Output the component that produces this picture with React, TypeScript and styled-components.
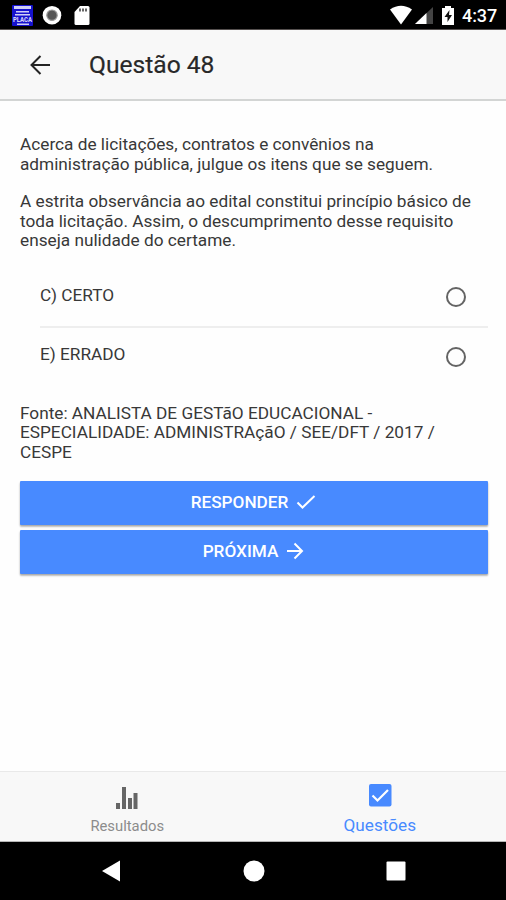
import React from "react";
import styled, { createGlobalStyle } from "styled-components";

const GlobalStyle = createGlobalStyle`
  *, *::before, *::after { box-sizing: border-box; }
  body { margin: 0; background: #fff; font-family: Roboto, "Liberation Sans", sans-serif; }
  svg { display: block; flex: none; }
`;

const Screen = styled.div`
  width: 506px;
  height: 900px;
  display: flex;
  flex-direction: column;
  overflow: hidden;
  background: #fefefe;
`;

const StatusBar = styled.div`
  height: 30px;
  flex: none;
  display: flex;
  justify-content: space-between;
  background: #000;
  border-bottom: 1px solid #55504f;
`;

const Clock = styled.span`
  width: 36px;
  margin: 5px 8px 0 0;
  color: #fff;
  font-size: 18px;
  line-height: 21px;
  font-weight: 500;
  letter-spacing: -0.1px;
  white-space: nowrap;
`;

const Header = styled.header`
  height: 71px;
  flex: none;
  display: flex;
  align-items: center;
  padding: 0 0 0 28px;
  background: #f8f8f8;
  border-bottom: 2px solid #d3d5d4;
`;

const BackButton = styled.button`
  width: 61px;
  padding: 0;
  border: 0;
  background: none;
`;

const Title = styled.h1`
  margin: 0;
  color: #282828;
  font-size: 24.6px;
  line-height: 30px;
  font-weight: 400;
  -webkit-text-stroke: 0.2px #282828;
`;

const Content = styled.main`
  flex: 1;
  display: flex;
  flex-direction: column;
  padding: 34px 18px 0 20px;
`;

const Paragraph = styled.p<{ $gap: number }>`
  margin: 0 0 ${(p) => p.$gap}px;
  color: #383838;
  font-size: 17.23px;
  line-height: 19.7px;
  white-space: nowrap;
`;

const Options = styled.div`
  display: flex;
  flex-direction: column;
  padding-left: 20px;
  margin-bottom: 17px;
`;

const Option = styled.label<{ $divided?: boolean }>`
  height: ${(p) => (p.$divided ? 61 : 59)}px;
  display: flex;
  align-items: center;
  justify-content: space-between;
  padding: ${(p) => (p.$divided ? "2px 22px 0 0" : "0 22px 1px 0")};
  color: #383838;
  font-size: 17.23px;
  line-height: 20px;
  border-bottom: ${(p) => (p.$divided ? "2px solid #eeeeee" : "none")};
`;

const OptionText = styled.span`
  margin-top: -5px;
`;

const Radio = styled.span`
  width: 20px;
  height: 20px;
  border: 2px solid #646464;
  border-radius: 50%;
`;

const ActionButton = styled.button`
  height: 44px;
  flex: none;
  display: flex;
  align-items: center;
  justify-content: center;
  gap: 7px;
  margin: 0 0 5px;
  padding: 0 0 1px;
  border: 0;
  border-radius: 1px;
  background: #488aff;
  color: #fff;
  font: 500 17.2px/20px Roboto, "Liberation Sans", sans-serif;
  box-shadow: 0 2px 2px rgba(0, 0, 0, 0.22), 0 1px 2px rgba(0, 0, 0, 0.18);
`;

const TabBar = styled.nav`
  height: 71px;
  flex: none;
  display: grid;
  grid-template-columns: 1fr 1fr;
  padding-left: 1px;
  background: #f8f8f8;
  border-top: 1px solid #e9e9e9;
  border-bottom: 1px solid #b5b5b5;
`;

const Tab = styled.a<{ $active?: boolean }>`
  display: flex;
  flex-direction: column;
  align-items: center;
  padding-top: ${(p) => (p.$active ? 12 : 14)}px;
  gap: ${(p) => (p.$active ? 8 : 6)}px;
  color: ${(p) => (p.$active ? "#488aff" : "#8c8c8c")};
  font-size: ${(p) => (p.$active ? 17.2 : 14.8)}px;
  line-height: 20px;
`;

const NavBar = styled.div`
  height: 58px;
  flex: none;
  display: flex;
  align-items: center;
  justify-content: space-between;
  padding: 0 100px 0 101px;
  background: #000;
`;

const NotificationIcons = () => (
  <svg width="120" height="29" viewBox="0 0 120 29">
    <rect x="12" y="5" width="21" height="21" rx="1" fill="#1512cf" />
    <g fill="#cfcff6">
      <path d="M14 6h17v3H14zM16 11h13v1.6H16zM15 14h15v1.5H15zM17 23.5h12v1.5H17z" />
      <text x="13" y="22" fontSize="6.5" fontWeight="900" textLength="19" lengthAdjust="spacingAndGlyphs">PLACA</text>
    </g>
    <circle cx="52" cy="15.2" r="9.3" fill="#fff" />
    <circle cx="52" cy="15.2" r="5.2" fill="#555" stroke="#999" strokeWidth="1.2" />
    <path d="M80 6h8q1.500 0 1.500 1.500v16q0 1.500-1.500 1.500H76q-1.500 0-1.500-1.500V12z" fill="#fff" />
    <path d="M80 8.500v3M83 8.500v3M86 8.500v3" stroke="#333" strokeWidth="1.500" />
  </svg>
);

const SystemIcons = () => (
  <svg width="72" height="29" viewBox="0 0 72 29">
    <path d="M0 9.500Q11 2 22 9.500L11 24.500z" fill="#fff" />
    <path d="M43 7v17H25z" fill="#444" />
    <path d="M36.500 13v11H25z" fill="#fff" />
    <path d="M55 6h6v2h3v17H52V8h3z" fill="#fff" />
    <path d="M59.500 10l-5 7h3v5l4.500-7h-3z" fill="#111" />
  </svg>
);

const StatusRight = styled.div`
  display: flex;
`;

export default function App() {
  return (
    <>
      <GlobalStyle />
      <Screen>
        <StatusBar>
          <NotificationIcons />
          <StatusRight>
            <SystemIcons />
            <Clock>4:37</Clock>
          </StatusRight>
        </StatusBar>
        <Header>
          <BackButton aria-label="Voltar">
            <svg width="24" height="22" viewBox="0 0 24 22" fill="none" stroke="#242424" strokeWidth="2">
              <path d="M22 11H4M12.500 2L3.500 11l9 9" />
            </svg>
          </BackButton>
          <Title>Questão 48</Title>
        </Header>
        <Content>
          <Paragraph $gap={17.5}>
            Acerca de licitações, contratos e convênios na
            <br />
            administração pública, julgue os itens que se seguem.
          </Paragraph>
          <Paragraph $gap={15.5}>
            A estrita observância ao edital constitui princípio básico de
            <br />
            toda licitação. Assim, o descumprimento desse requisito
            <br />
            enseja nulidade do certame.
          </Paragraph>
          <Options>
            <Option $divided>
              <OptionText>C) CERTO</OptionText>
              <Radio />
            </Option>
            <Option>
              <OptionText>E) ERRADO</OptionText>
              <Radio />
            </Option>
          </Options>
          <Paragraph $gap={18}>
            Fonte: ANALISTA DE GESTãO EDUCACIONAL -
            <br />
            ESPECIALIDADE: ADMINISTRAçãO / SEE/DFT / 2017 /
            <br />
            CESPE
          </Paragraph>
          <ActionButton>
            RESPONDER
            <svg width="22" height="20" viewBox="0 0 22 20" fill="none" stroke="#fff" strokeWidth="2">
              <path d="M2.500 10.500l5 5L19.500 4" />
            </svg>
          </ActionButton>
          <ActionButton>
            PRÓXIMA
            <svg width="20" height="20" viewBox="0 0 20 20" fill="none" stroke="#fff" strokeWidth="2">
              <path d="M2 10h15M9.500 2.500L17 10l-7.500 7.500" />
            </svg>
          </ActionButton>
        </Content>
        <TabBar>
          <Tab>
            <svg width="22" height="24" viewBox="0 0 22 24" fill="#666">
              <path d="M0 17h4v6H0zM6 1h4v22H6zM12 12h4v11h-4zM17.500 7h4v16h-4z" />
            </svg>
            Resultados
          </Tab>
          <Tab $active>
            <svg width="24" height="23" viewBox="0 0 24 23">
              <rect x="1" y="0" width="22.500" height="22.500" rx="2" fill="#488aff" />
              <path d="M4.500 11.500l5 5L20 6" fill="none" stroke="#fff" strokeWidth="2.200" />
            </svg>
            Questões
          </Tab>
        </TabBar>
        <NavBar>
          <svg width="20" height="22" viewBox="0 0 20 22" fill="#fff">
            <path d="M1 11L19 .5v21z" />
          </svg>
          <svg width="22" height="22" viewBox="0 0 22 22" fill="#fff">
            <circle cx="11" cy="11" r="10.500" />
          </svg>
          <svg width="20" height="20" viewBox="0 0 20 20" fill="#fff">
            <rect x=".5" y=".5" width="19" height="19" rx="1" />
          </svg>
        </NavBar>
      </Screen>
    </>
  );
}
